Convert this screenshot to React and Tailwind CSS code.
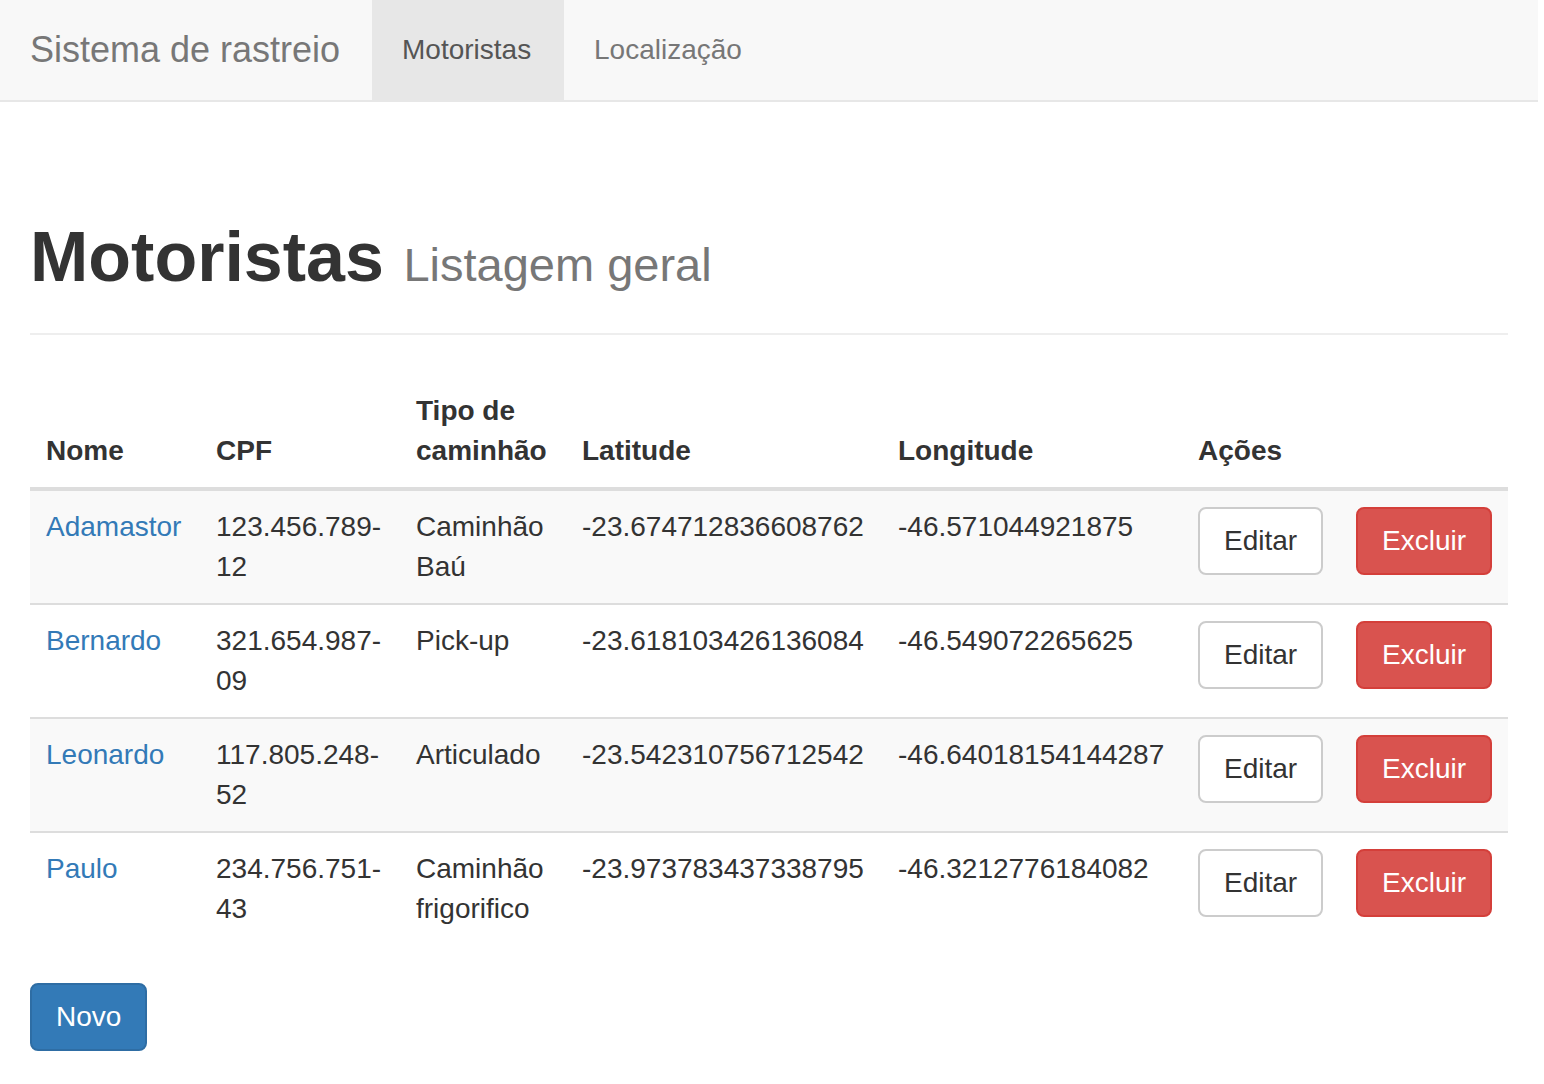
const drivers = [
    {nome: "Adamastor", cpf: "123.456.789-12", tipo: "Caminhão Baú", lat: "-23.674712836608762", lng: "-46.571044921875"},
    {nome: "Bernardo", cpf: "321.654.987-09", tipo: "Pick-up", lat: "-23.618103426136084", lng: "-46.549072265625"},
    {nome: "Leonardo", cpf: "117.805.248-52", tipo: "Articulado", lat: "-23.542310756712542", lng: "-46.64018154144287"},
    {nome: "Paulo", cpf: "234.756.751-43", tipo: "Caminhão frigorifico", lat: "-23.973783437338795", lng: "-46.3212776184082"},
];

function Navbar() {
    return (
        <nav className="flex h-[102px] bg-[#f8f8f8] border-b-2 border-[#e7e7e7]">
            <a href="#" className="w-[372px] pl-[30px] py-[30px] text-[36px] leading-[40px] text-[#777]">Sistema de rastreio</a>
            <a href="#" className="w-[192px] pl-[30px] py-[30px] text-[28px] leading-[40px] text-[#555] bg-[#e7e7e7]">Motoristas</a>
            <a href="#" className="pl-[30px] pr-[30px] py-[30px] text-[28px] leading-[40px] text-[#777]">Localização</a>
        </nav>
    );
}

function App() {
    return (
        <div className="w-[1538px] bg-white text-[#333] text-[28px] leading-[40px]"
             style={{fontFamily: '"Liberation Sans", Arial, sans-serif'}}>
            <Navbar/>
            <div className="px-[30px]">
                <div className="mt-[116px] pb-[29px] border-b-2 border-[#eee] mb-[40px]">
                    <h1 className="text-[70px] leading-[79px] font-bold text-[#333]">
                        Motoristas <small className="text-[47px] font-normal text-[#777]">Listagem geral</small>
                    </h1>
                </div>
                <table className="w-full table-fixed border-collapse mb-[38px]">
                    <colgroup>
                        <col className="w-[170px]"/>
                        <col className="w-[200px]"/>
                        <col className="w-[166px]"/>
                        <col className="w-[316px]"/>
                        <col className="w-[300px]"/>
                        <col className="w-[158px]"/>
                        <col/>
                    </colgroup>
                    <thead>
                    <tr className="text-left align-bottom">
                        <th className="p-4 font-bold border-b-4 border-[#ddd]">Nome</th>
                        <th className="p-4 font-bold border-b-4 border-[#ddd]">CPF</th>
                        <th className="p-4 font-bold border-b-4 border-[#ddd]">Tipo de caminhão</th>
                        <th className="p-4 font-bold border-b-4 border-[#ddd]">Latitude</th>
                        <th className="p-4 font-bold border-b-4 border-[#ddd]">Longitude</th>
                        <th className="p-4 font-bold border-b-4 border-[#ddd]" colSpan={2}>Ações</th>
                    </tr>
                    </thead>
                    <tbody>
                    {drivers.map((d, i) => (
                        <tr key={d.nome} className={"align-top border-t-2 border-[#ddd] " + (i % 2 === 0 ? "bg-[#f9f9f9]" : "bg-white")}>
                            <td className="p-4"><a href="#" className="text-[#337ab7]">{d.nome}</a></td>
                            <td className="p-4">{d.cpf}</td>
                            <td className="p-4">{d.tipo}</td>
                            <td className="p-4">{d.lat}</td>
                            <td className="p-4">{d.lng}</td>
                            <td className="p-4">
                                <button className="h-[68px] px-[24px] text-[28px] leading-[40px] text-[#333] bg-white border-2 border-[#ccc] rounded-[8px]">Editar</button>
                            </td>
                            <td className="p-4">
                                <button className="h-[68px] px-[24px] text-[28px] leading-[40px] text-white bg-[#d9534f] border-2 border-[#d43f3a] rounded-[8px]">Excluir</button>
                            </td>
                        </tr>
                    ))}
                    </tbody>
                </table>
                <button className="h-[68px] px-[24px] text-[28px] leading-[40px] text-white bg-[#337ab7] border-2 border-[#2e6da4] rounded-[8px]">Novo</button>
            </div>
        </div>
    );
}

export default App;
